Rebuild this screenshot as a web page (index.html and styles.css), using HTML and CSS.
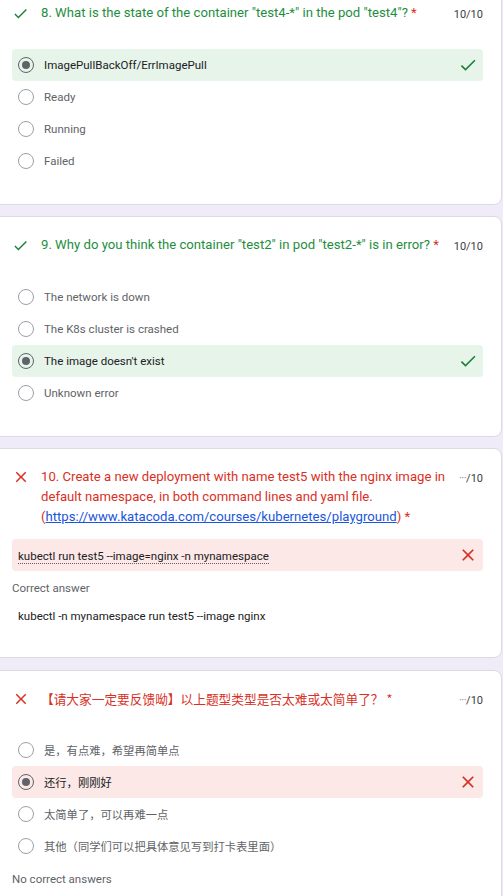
FILE: index.html
```html
<!DOCTYPE html>
<html lang="en">
<head>
<meta charset="utf-8">
<title>Quiz results</title>
<link rel="stylesheet" href="styles.css">
</head>
<body>
<main class="page">

  <section class="card card-first">
    <div class="q-head">
      <span class="q-mark">
        <svg class="ico ico-check" viewBox="0 0 24 24"><path d="M9 16.17L4.83 12l-1.42 1.41L9 19 21 7l-1.41-1.41z"/></svg>
      </span>
      <div class="q-title ok">8. What is the state of the container "test4-*" in the pod "test4"? <span class="req">*</span></div>
      <div class="q-score">10/10</div>
    </div>
    <div class="opts">
      <div class="opt sel right"><span class="radio on"></span><span class="opt-text">ImagePullBackOff/ErrImagePull</span>
        <svg class="ico ico-opt-check" viewBox="0 0 24 24"><path d="M9 16.17L4.83 12l-1.42 1.41L9 19 21 7l-1.41-1.41z"/></svg></div>
      <div class="opt"><span class="radio"></span><span class="opt-text">Ready</span></div>
      <div class="opt"><span class="radio"></span><span class="opt-text">Running</span></div>
      <div class="opt"><span class="radio"></span><span class="opt-text">Failed</span></div>
    </div>
  </section>

  <section class="card">
    <div class="q-head">
      <span class="q-mark">
        <svg class="ico ico-check" viewBox="0 0 24 24"><path d="M9 16.17L4.83 12l-1.42 1.41L9 19 21 7l-1.41-1.41z"/></svg>
      </span>
      <div class="q-title ok">9. Why do you think the container "test2" in pod "test2-*" is in error? <span class="req">*</span></div>
      <div class="q-score">10/10</div>
    </div>
    <div class="opts">
      <div class="opt"><span class="radio"></span><span class="opt-text">The network is down</span></div>
      <div class="opt"><span class="radio"></span><span class="opt-text">The K8s cluster is crashed</span></div>
      <div class="opt sel right"><span class="radio on"></span><span class="opt-text">The image doesn't exist</span>
        <svg class="ico ico-opt-check" viewBox="0 0 24 24"><path d="M9 16.17L4.83 12l-1.42 1.41L9 19 21 7l-1.41-1.41z"/></svg></div>
      <div class="opt"><span class="radio"></span><span class="opt-text">Unknown error</span></div>
    </div>
  </section>

  <section class="card card-text">
    <div class="q-head">
      <span class="q-mark">
        <svg class="ico ico-x" viewBox="0 0 24 24"><path d="M19 6.41L17.59 5 12 10.59 6.41 5 5 6.41 10.59 12 5 17.59 6.41 19 12 13.41 17.59 19 19 17.59 13.41 12z"/></svg>
      </span>
      <div class="q-title bad">10. Create a new deployment with name test5 with the nginx image in default namespace, in both command lines and yaml file. (<a class="link" href="#">https://www.katacoda.com/courses/kubernetes/playground</a>) <span class="req">*</span></div>
      <div class="q-score"><span class="dots">···</span>/10</div>
    </div>
    <div class="answer wrong">
      <span class="answer-text">kubectl run test5 --image=nginx -n mynamespace</span>
      <svg class="ico ico-opt-x" viewBox="0 0 24 24"><path d="M19 6.41L17.59 5 12 10.59 6.41 5 5 6.41 10.59 12 5 17.59 6.41 19 12 13.41 17.59 19 19 17.59 13.41 12z"/></svg>
    </div>
    <div class="label">Correct answer</div>
    <div class="correct">kubectl -n mynamespace run test5 --image nginx</div>
  </section>

  <section class="card card-last">
    <div class="q-head">
      <span class="q-mark">
        <svg class="ico ico-x" viewBox="0 0 24 24"><path d="M19 6.41L17.59 5 12 10.59 6.41 5 5 6.41 10.59 12 5 17.59 6.41 19 12 13.41 17.59 19 19 17.59 13.41 12z"/></svg>
      </span>
      <div class="q-title bad cjk">【请大家一定要反馈呦】以上题型类型是否太难或太简单了？ <span class="req">*</span></div>
      <div class="q-score"><span class="dots">···</span>/10</div>
    </div>
    <div class="opts opts-cjk">
      <div class="opt"><span class="radio"></span><span class="opt-text">是，有点难，希望再简单点</span></div>
      <div class="opt sel wrong"><span class="radio on"></span><span class="opt-text">还行，刚刚好</span>
        <svg class="ico ico-opt-x" viewBox="0 0 24 24"><path d="M19 6.41L17.59 5 12 10.59 6.41 5 5 6.41 10.59 12 5 17.59 6.41 19 12 13.41 17.59 19 19 17.59 13.41 12z"/></svg></div>
      <div class="opt"><span class="radio"></span><span class="opt-text">太简单了，可以再难一点</span></div>
      <div class="opt"><span class="radio"></span><span class="opt-text">其他（同学们可以把具体意见写到打卡表里面）</span></div>
    </div>
    <div class="label">No correct answers</div>
  </section>

</main>
</body>
</html>
```
FILE: styles.css
```css
* { box-sizing: border-box; }

html, body {
  margin: 0;
  padding: 0;
  background: #f0ebf8;
  overflow: hidden;
}

body {
  font-family: Roboto, "Noto Sans CJK SC", sans-serif;
  color: #202124;
  width: 503px;
  height: 896px;
}

.page {
  display: flex;
  flex-direction: column;
  gap: 11px;
}

.card {
  background: #fff;
  border: 1px solid #dadce0;
  border-radius: 8px;
  margin-left: -10px;
  margin-right: 1px;
  padding: 18px 18px 27px 21px;
}

.card-first { margin-top: -16px; }
.card-text { padding-bottom: 31px; }
.card-last { padding-bottom: 60px; margin-top: 1px; }

.q-head {
  display: flex;
  align-items: flex-start;
}

.q-mark {
  width: 29px;
  flex: 0 0 29px;
  height: 20px;
  display: flex;
  align-items: center;
}

.ico { display: block; }
.ico-check { width: 17px; height: 17px; fill: #188038; }
.ico-x { width: 18px; height: 18px; fill: #d93025; }

.q-title {
  flex: 1;
  font-size: 13.15px;
  line-height: 20px;
  padding-right: 8px;
}
.q-title.ok { color: #1e8e3e; }
.q-title.bad { color: #d93025; }
.q-title.cjk { font-family: "Noto Sans CJK SC", sans-serif; font-size: 12.7px; }

.req { color: #d93025; }

.link { color: #1a56db; text-decoration: underline; }

.q-score {
  font-size: 11px;
  line-height: 17px;
  height: 20px;
  color: #3c4043;
  white-space: nowrap;
  padding-top: 3px;
}
.dots { color: #80868b; letter-spacing: -0.5px; }

.opts {
  margin-top: 26px;
  display: flex;
  flex-direction: column;
}
.opts-cjk { margin-top: 25px; }

.opt {
  height: 32px;
  display: flex;
  align-items: center;
  padding: 0 5px 0 6px;
  border-radius: 4px;
  font-size: 11.5px;
  color: #5f6368;
}
.opt.sel { color: #202124; }
.opt.right { background: #e6f4ea; }
.opt.wrong { background: #fce8e6; }

.opts-cjk .opt { font-family: "Noto Sans CJK SC", sans-serif; font-size: 11.3px; }

.radio {
  width: 16px;
  height: 16px;
  flex: 0 0 16px;
  border: 1.5px solid #9aa0a6;
  border-radius: 50%;
  margin-right: 10px;
  display: flex;
  align-items: center;
  justify-content: center;
}
.radio.on { border-color: #5f6368; }
.radio.on::after {
  content: "";
  width: 8px;
  height: 8px;
  border-radius: 50%;
  background: #5f6368;
}

.opt-text { flex: 1; }

.ico-opt-check { width: 20px; height: 20px; fill: #188038; }
.ico-opt-x { width: 20px; height: 20px; fill: #d93025; }

.answer {
  margin-top: 12px;
  height: 32px;
  display: flex;
  align-items: center;
  padding: 0 5px 0 6px;
  border-radius: 4px;
  font-size: 11.5px;
}
.answer.wrong { background: #fce8e6; }
.answer-text {
  flex: 0 1 auto;
  margin-right: auto;
  border-bottom: 1px dotted #5f6368;
  line-height: 14px;
  margin-top: 2px;
}

.label {
  margin-top: 7px;
  font-size: 11.5px;
  line-height: 20px;
  color: #5f6368;
}

.correct {
  margin-top: 8px;
  padding-left: 6px;
  font-size: 11.5px;
  line-height: 20px;
  color: #202124;
}
```
